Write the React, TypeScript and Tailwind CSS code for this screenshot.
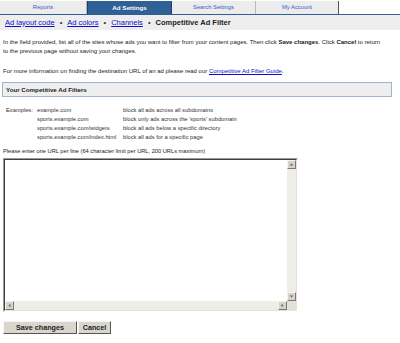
import React from "react";

const font = { fontFamily: '"Liberation Sans", Arial, sans-serif' };

function ScrollBtn({ dir }: { dir: "up" | "down" | "left" | "right" }) {
  const pts: Record<string, string> = {
    up: "1.5,4 4.5,1 7.5,4",
    down: "1.5,1 4.5,4 7.5,1",
    left: "4,1.5 1,4.5 4,7.5",
    right: "1,1.5 4,4.5 1,7.5",
  };
  const vb = dir === "up" || dir === "down" ? "0 0 9 5" : "0 0 5 9";
  const cls = dir === "up" || dir === "down" ? "w-[5px] h-[3px]" : "w-[3px] h-[5px]";
  return (
    <div className="w-[9px] h-[9px] shrink-0 flex items-center justify-center bg-[#d6d3ca] border border-t-[#f4f3ee] border-l-[#f4f3ee] border-r-[#7a7a72] border-b-[#7a7a72]">
      <svg viewBox={vb} className={cls} preserveAspectRatio="none">
        <polygon points={pts[dir]} fill="#5a5a52" />
      </svg>
    </div>
  );
}

export default function App() {
  return (
    <div className="w-[400px] h-[343px] bg-white overflow-hidden text-black" style={font}>
      {/* Tabs */}
      <div className="flex h-[14px] items-stretch text-[5.8px] pt-[1px]">
        <div className="w-[87px] bg-[#ececec] border-r border-[#b8b8b8] flex items-center justify-center text-[#3060c8]">Reports</div>
        <div className="w-[85px] bg-[#2f6197] border-x border-[#1e3f66] flex items-center justify-center text-white font-bold text-[6.2px] bg-[radial-gradient(#4a7ab0_0.5px,transparent_0.6px)] bg-[length:2px_2px]">Ad Settings</div>
        <div className="w-[84px] bg-[#ececec] border-r border-[#b8b8b8] flex items-center justify-center text-[#3060c8]">Search Settings</div>
        <div className="w-[83px] bg-[#ececec] border-r border-[#555] flex items-center justify-center text-[#3060c8]">My Account</div>
      </div>
      {/* Sub nav */}
      <div className="h-[16px] bg-[#eeeeee] border-t border-[#2f6197] flex items-center pl-[5px] text-[7.5px] leading-none">
        <a className="text-[#1010cc] underline">Ad layout code</a>
        <span className="px-[5px] text-[#333]">•</span>
        <a className="text-[#1010cc] underline">Ad colors</a>
        <span className="px-[5px] text-[#333]">•</span>
        <a className="text-[#1010cc] underline">Channels</a>
        <span className="px-[5px] text-[#333]">•</span>
        <span className="font-bold text-[#222]">Competitive Ad Filter</span>
      </div>
      {/* Intro */}
      <div className="pl-[3px] text-[6px] leading-[9px] text-[#222]">
        <p className="mt-[8px]">
          In the field provided, list all of the sites whose ads you want to filter from your content pages. Then click <b>Save changes</b>. Click <b>Cancel</b> to return
          <br />
          to the previous page without saving your changes.
        </p>
        <p className="mt-[11px]">
          For more information on finding the destination URL of an ad please read our{" "}
          <a className="text-[#1010cc] underline">Competitive Ad Filter Guide</a>.
        </p>
      </div>
      {/* Box */}
      <div className="ml-[2px] mt-[6px] w-[390px] h-[15px] bg-[#eeeeee] border border-[#9fb3cc] flex items-center pl-[3px] text-[6.2px] font-bold text-[#222]">
        Your Competitive Ad Filters
      </div>
      {/* Examples */}
      <div className="mt-[9px] pl-[6px] grid grid-cols-[31px_86px_1fr] text-[5.75px] leading-[9px] text-[#333]">
        <div>Examples:</div>
        <div>example.com</div>
        <div>block all ads across all subdomains</div>
        <div />
        <div>sports.example.com</div>
        <div>block only ads across the 'sports' subdomain</div>
        <div />
        <div>sports.example.com/widgets</div>
        <div>block all ads below a specific directory</div>
        <div />
        <div>sports.example.com/index.html</div>
        <div>block all ads for a specific page</div>
      </div>
      <div className="mt-[5px] pl-[3px] text-[5.7px] leading-[9px] text-[#222]">
        Please enter one URL per line (64 character limit per URL, 200 URLs maximum)
      </div>
      {/* Textarea */}
      <div className="ml-[3px] mt-[2px] w-[295px] h-[154px] border border-t-[#9a9a9a] border-l-[#9a9a9a] border-r-white border-b-white">
        <div className="w-full h-full border border-t-[#404040] border-l-[#404040] border-r-[#e4e2da] border-b-[#e4e2da] flex flex-col">
          <div className="flex flex-1 min-h-0">
            <textarea className="flex-1 resize-none outline-none bg-white border-0 p-0" />
            <div className="w-[9px] flex flex-col bg-[#eeede6]">
              <ScrollBtn dir="up" />
              <div className="flex-1" />
              <ScrollBtn dir="down" />
            </div>
          </div>
          <div className="flex h-[9px]">
            <div className="flex flex-1 bg-[#eeede6]">
              <ScrollBtn dir="left" />
              <div className="flex-1" />
              <ScrollBtn dir="right" />
            </div>
            <div className="w-[9px] bg-[#e2e0d8]" />
          </div>
        </div>
      </div>
      {/* Buttons */}
      <div className="mt-[9px] ml-[3px] flex gap-[1px]">
        <button className="w-[74px] h-[13px] bg-[#d9d6ce] border border-t-[#f6f5f0] border-l-[#f6f5f0] border-r-[#555] border-b-[#555] text-[7.2px] font-bold leading-none text-[#222] flex items-center justify-center">
          Save changes
        </button>
        <button className="w-[33px] h-[13px] bg-[#d9d6ce] border border-t-[#f6f5f0] border-l-[#f6f5f0] border-r-[#555] border-b-[#555] text-[7.2px] font-bold leading-none text-[#222] flex items-center justify-center">
          Cancel
        </button>
      </div>
    </div>
  );
}
